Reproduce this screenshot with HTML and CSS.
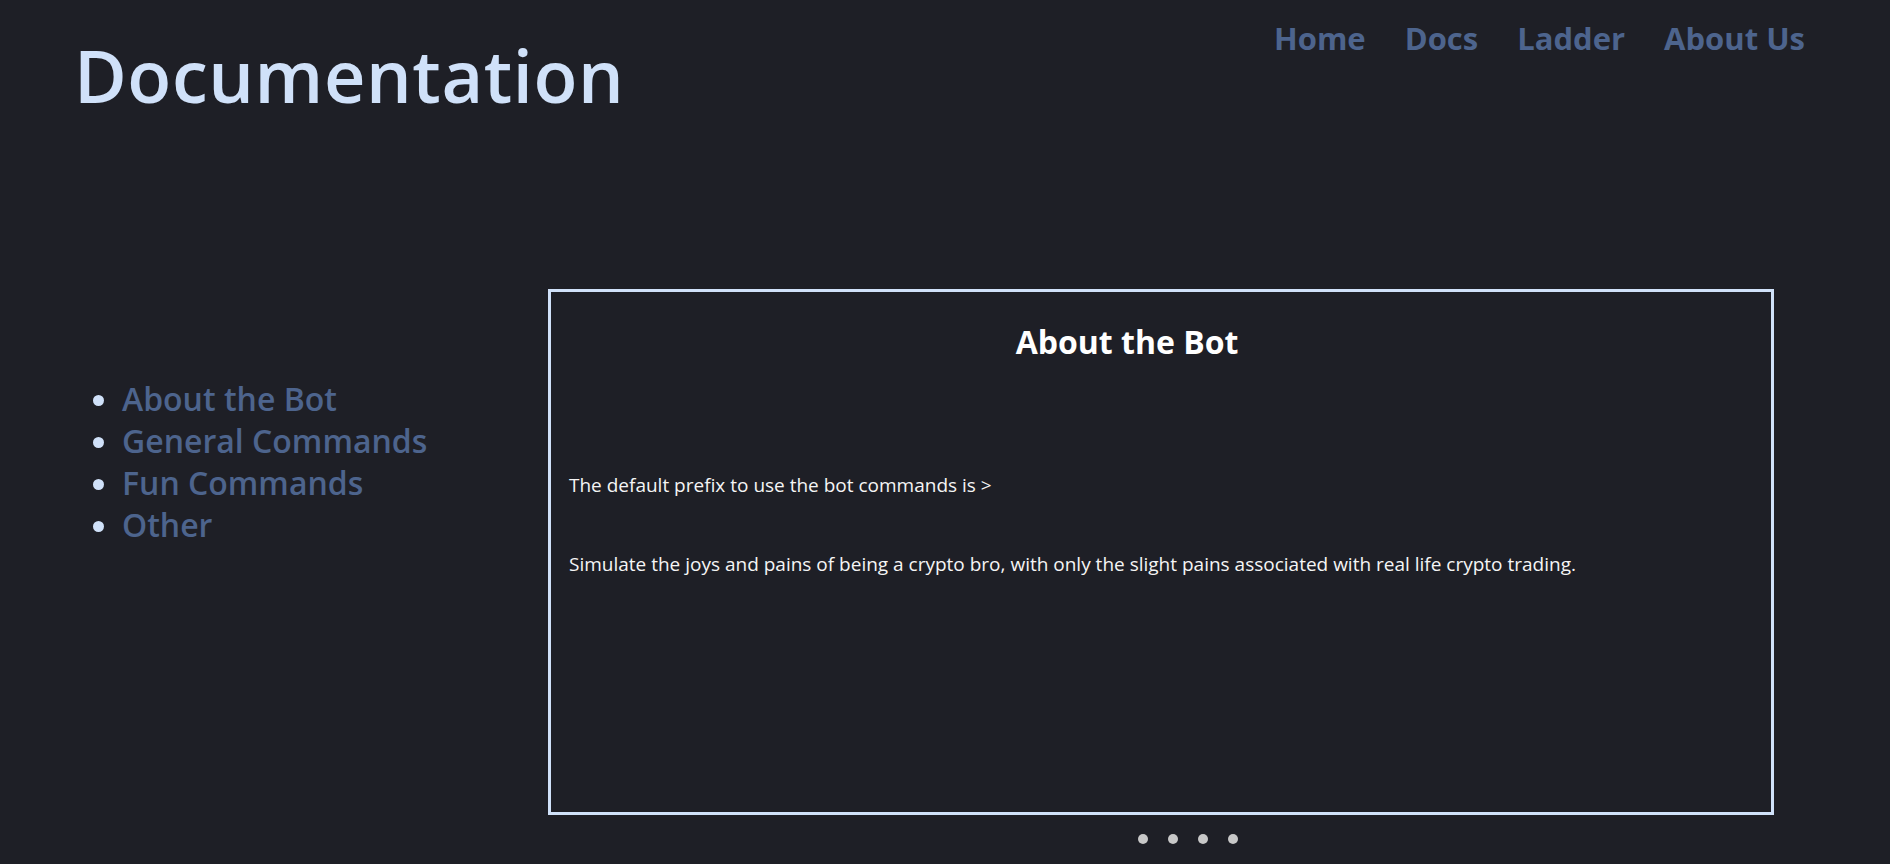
FILE: index.html
```html
<!DOCTYPE html>
<html lang="en">
<head>
<meta charset="utf-8">
<title>Documentation</title>
<link rel="stylesheet" href="styles.css">
</head>
<body>
<header class="top">
  <h1 class="title">Documentation</h1>
  <nav class="nav">
    <a href="#">Home</a>
    <a href="#">Docs</a>
    <a href="#">Ladder</a>
    <a href="#">About Us</a>
  </nav>
</header>
<main class="main">
  <aside class="side">
    <ul class="side-list">
      <li><a href="#">About the Bot</a></li>
      <li><a href="#">General Commands</a></li>
      <li><a href="#">Fun Commands</a></li>
      <li><a href="#">Other</a></li>
    </ul>
  </aside>
  <div class="content">
    <section class="box">
      <h2 class="box-title">About the Bot</h2>
      <p class="p1">The default prefix to use the bot commands is &gt;</p>
      <p class="p2">Simulate the joys and pains of being a crypto bro, with only the slight pains associated with real life crypto trading.</p>
    </section>
    <div class="dots">
      <span class="dot"></span>
      <span class="dot"></span>
      <span class="dot"></span>
      <span class="dot"></span>
    </div>
  </div>
</main>
</body>
</html>
```
FILE: styles.css
```css
html, body {
  margin: 0;
  padding: 0;
  background: #1e1f26;
  height: 100%;
  overflow: hidden;
}
body {
  font-family: "Open Sans", "Noto Sans", sans-serif;
  color: #f5f5f5;
}
.top {
  display: flex;
  justify-content: space-between;
  align-items: flex-start;
  height: 289px;
}
.title {
  margin: 39px 0 0 74px;
  font-size: 72px;
  line-height: 72px;
  font-weight: 600;
  letter-spacing: 0.6px;
  color: #d0e1f9;
}
.nav {
  display: flex;
  gap: 39px;
  margin: 22px 85px 0 0;
}
.nav a {
  font-size: 31px;
  line-height: 32px;
  font-weight: 700;
  color: #4d648d;
  text-decoration: none;
}
.main {
  display: flex;
  align-items: flex-start;
}
.side {
  width: 548px;
  flex: none;
}
.side-list {
  margin: 89px 0 0 82px;
  padding-left: 40px;
  color: #d0e1f9;
}
.side-list li {
  font-size: 32px;
  line-height: 42px;
  font-weight: 600;
}
.side-list a {
  color: #4d648d;
  text-decoration: none;
}
.content {
  width: 1226px;
  flex: none;
}
.box {
  box-sizing: border-box;
  width: 1226px;
  height: 526px;
  border: 3px solid #d0e1f9;
  padding: 30px 18px 0 18px;
}
.box-title {
  margin: 0 68px 0 0;
  text-align: center;
  font-size: 32px;
  line-height: 40px;
  font-weight: 700;
  color: #ffffff;
}
.p1, .p2 {
  font-size: 19px;
  line-height: 24px;
  margin: 0;
}
.p1 { margin-top: 111px; }
.p2 { margin-top: 55px; }
.dots {
  display: flex;
  justify-content: center;
  gap: 20px;
  padding-left: 54px;
  margin-top: 19px;
}
.dot {
  width: 10px;
  height: 10px;
  border-radius: 50%;
  background: #c8c8c8;
}
```
